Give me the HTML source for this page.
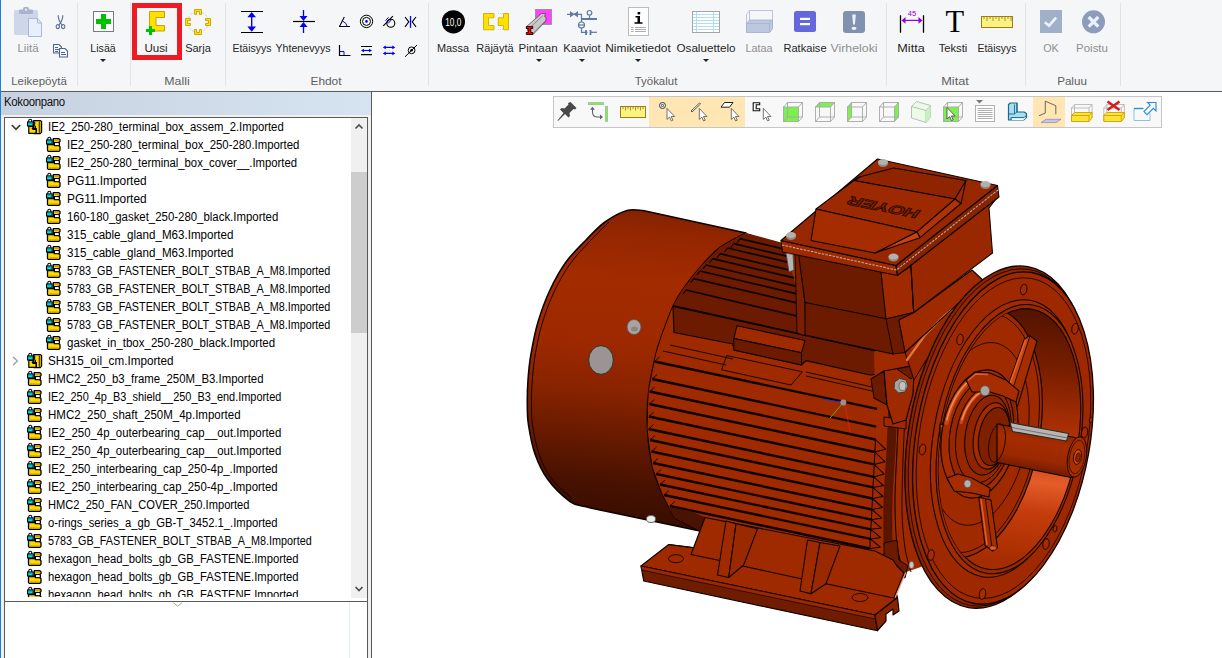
<!DOCTYPE html>
<html lang="fi">
<head>
<meta charset="utf-8">
<title>Kokoonpano</title>
<style>
*{box-sizing:border-box;margin:0;padding:0}
html,body{width:1222px;height:658px;overflow:hidden;background:#fff}
body{position:relative;font-family:"Liberation Sans",sans-serif;font-size:12px;color:#1e1e1e}
.abs{position:absolute}
#ribbon{position:absolute;left:0;top:0;width:1222px;height:91px;background:#f5f6f7}
#ribline{position:absolute;left:0;top:91px;width:1222px;height:1px;background:#5a5a5a}
.sep{position:absolute;top:3px;width:1px;height:83px;background:#e2e3e4}
.lbl{position:absolute;top:41px;height:15px;line-height:15px;font-size:11.8px;white-space:nowrap;transform:translateX(-50%) scaleX(var(--s,1));color:#262626}
.lbl.dis{color:#8f8f8f}
.grp{position:absolute;top:74px;height:15px;line-height:15px;font-size:11.8px;white-space:nowrap;transform:translateX(-50%) scaleX(var(--s,1));color:#5e5e5e}
.dd{position:absolute;top:59px;width:0;height:0;border-left:3px solid transparent;border-right:3px solid transparent;border-top:3px solid #222;transform:translateX(-3px)}
.ico{position:absolute;overflow:visible}
#leftedge{position:absolute;left:0;top:0;width:1px;height:658px;background:#1a80d9}
#panel{position:absolute;left:1px;top:92px;width:370px;height:566px;background:#f0f0f0}
#panelr{position:absolute;left:371px;top:92px;width:1px;height:566px;background:#5a5a5a}
#phead{position:absolute;left:1px;top:92px;width:370px;height:23px;background:linear-gradient(90deg,#c6d2e0,#d6e3f1)}
#phead span{position:absolute;left:3px;top:3px;font-size:12px;line-height:15px;color:#111;letter-spacing:-0.35px;transform-origin:0 50%;transform:scaleX(0.95);display:inline-block}
#tree{position:absolute;left:4px;top:117px;width:364px;height:485px;background:#fff;border:1px solid #5a5a5a;overflow:hidden}
#treeclip{position:absolute;left:0;top:0;width:346px;height:479px;overflow:hidden}
#sb{position:absolute;left:346px;top:0;width:16px;height:480px;background:#f0f0f0}
#lower{position:absolute;left:4px;top:602px;width:364px;height:56px;background:#fff;border-left:1px solid #5a5a5a;border-right:1px solid #5a5a5a}
.row{position:absolute;height:18px;line-height:18px;font-size:12px;white-space:nowrap;color:#000;transform-origin:0 50%;transform:scaleX(var(--s,1))}
#view{position:absolute;left:372px;top:92px;width:850px;height:566px;background:#fff;overflow:hidden}
</style>
</head>
<body>
<div id="ribbon">
<div class="sep" style="left:77px"></div>
<div class="sep" style="left:130px"></div>
<div class="sep" style="left:225px"></div>
<div class="sep" style="left:428px"></div>
<div class="sep" style="left:886px"></div>
<div class="sep" style="left:1025px"></div>
<div class="sep" style="left:1120px"></div>
<div class="abs" style="left:132px;top:3px;width:50px;height:57px;border:5px solid #ed1c24"></div>
<svg class="ico" style="left:0;top:0" width="1222" height="91" viewBox="0 0 1222 91">
<!-- Liita clipboard -->
<rect x="14" y="10" width="24" height="25" rx="1.5" fill="#cdd7e7"/>
<rect x="19" y="9.5" width="14" height="4.5" rx="1" fill="#a8b4cd"/>
<rect x="23" y="7" width="6" height="4" rx="1.5" fill="#a8b4cd"/>
<circle cx="26" cy="9.7" r="1.1" fill="#e8edf6"/>
<path d="M28.5 18.5h9l4 4.5v13.5h-13z" fill="#e8eefb" stroke="#a9b8d4" stroke-width="1"/>
<path d="M37.5 18.5v4.5h4" fill="none" stroke="#a9b8d4" stroke-width="1"/>
<!-- scissors -->
<g fill="none" stroke="#586d96" stroke-width="1.1">
<path d="M58.2 15.2c0 4 1 6.5 4.2 10.2"/><path d="M62.8 15.2c0 4-1 6.500-4.200 10.200"/>
<ellipse cx="57.800" cy="26.600" rx="1.700" ry="2"/><ellipse cx="63.200" cy="26.600" rx="1.700" ry="2"/>
</g>
<!-- copy -->
<g fill="#f5f6f7" stroke="#4f6690" stroke-width="1.1">
<path d="M53.500 44.500h5.500l2.500 2.500v6h-8z"/>
<path d="M59.500 48.500h5.500l2.500 2.500v6h-8z"/>
</g>
<g stroke="#4f6690" stroke-width="1"><path d="M55 47.500h3M55 49.500h4M55 51.500h3M61 52.500h4M61 54.500h5"/></g>
<!-- Lisaa -->
<rect x="93.500" y="11.500" width="20" height="20" fill="#fff" stroke="#7a7a7a" stroke-width="1"/>
<path d="M96 19h5v-5h5v5h5v5h-5v5h-5v-5h-5z" fill="#00c100"/>
<!-- Uusi -->
<path d="M149.500 11.500h15v6h-8.500v8h8.500v5.500h-15z" fill="#ffe100" stroke="#c9a300" stroke-width="1"/>
<path d="M146 29h3v-3h3v3h3v3h-3v3h-3v-3h-3z" fill="#00c100"/>
<!-- Sarja -->
<circle cx="198" cy="22" r="10.300" fill="none" stroke="#c4c4c4" stroke-width="0.800" stroke-dasharray="2.500 1.500"/>
<g fill="#ffe100" stroke="#c9a300" stroke-width="0.900">
<path d="M194.500 14.500v-5h7v5h-2v-3h-3v3z"/>
<path d="M194.500 29.500v5h7v-5h-2v3h-3v-3z"/>
<path d="M190.500 18.500h-5v7h5v-2h-3v-3h3z"/>
<path d="M205.500 18.500h5v7h-5v-2h3v-3h-3z"/>
</g>
<!-- Etaisyys -->
<path d="M241 11.500h22M241 32.500h22" stroke="#000" stroke-width="1.200"/>
<path d="M251.700 14v16" stroke="#0000ff" stroke-width="1.400"/>
<path d="M251.700 12l4.300 5.200h-8.600zM251.700 31.800l4.300-5.200h-8.600z" fill="#0000ff"/>
<!-- Yhtenevyys -->
<path d="M293 21.500h22" stroke="#000" stroke-width="1.200"/>
<path d="M303.500 10v9M303.500 24v9" stroke="#0000ff" stroke-width="1.300"/>
<path d="M303.500 21l4-5h-8zM303.500 22l4 5h-8z" fill="#0000ff"/>
<!-- small constraint icons row1 -->
<path d="M339 26.500h11M339.500 26.500l4.800-9.500" fill="none" stroke="#000" stroke-width="1.100"/>
<path d="M342.500 21l3.300 2.300l1.200 2.800" fill="none" stroke="#0000ff" stroke-width="1"/>
<circle cx="366.500" cy="21.400" r="6.200" fill="none" stroke="#000" stroke-width="1"/>
<circle cx="366.500" cy="21.400" r="4" fill="none" stroke="#000" stroke-width="1"/>
<circle cx="366.500" cy="21.400" r="1.300" fill="#0000ff"/>
<path d="M383.300 25.800l9.600-9.700" stroke="#000" stroke-width="1.100"/>
<circle cx="390.800" cy="23.300" r="4" fill="none" stroke="#000" stroke-width="1.100"/>
<path d="M385.500 20.700l3-3.400M388.200 23.400l3-3.400" stroke="#0000ff" stroke-width="1"/>
<path d="M410.500 16v11.800" stroke="#0000ff" stroke-width="1.300"/>
<path d="M405 17l3.800 4.800l-3.800 5M416 17l-3.800 4.800l3.800 5" fill="none" stroke="#000" stroke-width="1.100"/>
<!-- row2 -->
<path d="M339.500 45v10.500h11" fill="none" stroke="#000" stroke-width="1.200"/>
<path d="M339.500 51.500h4.500v4" fill="none" stroke="#0000ff" stroke-width="1"/>
<path d="M361 46.500h11M361 54.700h11" stroke="#000" stroke-width="1.200"/>
<path d="M362.500 50.500h8" stroke="#0000ff" stroke-width="1.100"/>
<path d="M361 50.500l3-1.800v3.600zM372 50.500l-3-1.800v3.600z" fill="#0000ff"/>
<path d="M384 47.400h10M384 53.400h10" stroke="#0000ff" stroke-width="1.100"/>
<path d="M382.800 47.400l3-1.800v3.600zM395.300 47.400l-3-1.800v3.600zM382.800 53.400l3-1.800v3.600zM395.300 53.400l-3-1.800v3.600z" fill="#0000ff"/>
<path d="M405 56.800l12-11.800" stroke="#000" stroke-width="1"/>
<circle cx="411.600" cy="50.300" r="3.400" fill="none" stroke="#000" stroke-width="1"/>
<circle cx="411.600" cy="50.300" r="1.300" fill="#000"/>
<!-- Massa -->
<circle cx="453.400" cy="21.800" r="11.600" fill="#000"/>
<text x="453.300" y="26" font-family="Liberation Sans, sans-serif" font-size="11.500" fill="#fff" text-anchor="middle" textLength="16" lengthAdjust="spacingAndGlyphs">10,0</text>
<!-- Rajayta -->
<path d="M486 13.500h6M486 29.500h6M500 13.500h-6M500 29.500h-6" stroke="#c8c8c8" stroke-width="0.800" stroke-dasharray="1 1" transform="translate(3 0)"/>
<path d="M483.500 13.500h10.500v4.300h-5.500v7.700h5.500v4.300h-10.500z" fill="#ffe100" stroke="#d1ab00" stroke-width="0.900"/>
<path d="M508.500 13.500h-5v4.300h-5.200v7.700h5.200v4.300h5z" fill="#ffe100" stroke="#d1ab00" stroke-width="0.900"/>
<!-- Pintaan -->
<rect x="535.500" y="9.500" width="16" height="15" fill="#ff40ff" stroke="#8c8c8c" stroke-width="0.800"/>
<path d="M526.500 26.500l15-13h4l-1 3l1.500 1v3.500l-13 13.500h-4z" fill="#c8c8c8" stroke="#404040" stroke-width="0.700"/>
<path d="M533 33.500l13-13.500M530 27.500l13-12" stroke="#707070" stroke-width="0.700"/>
<path d="M526.300 26.500h6.500v2h-2v4h2v2h-6.500v-2h2v-4h-2z" fill="#ff0000" stroke="#000" stroke-width="0.800"/>
<!-- Kaaviot -->
<g fill="none" stroke="#5d79a6" stroke-width="1.200">
<path d="M567 14.300h14.500v18h6"/>
<path d="M581.500 19h15.500" stroke-width="2"/>
<path d="M589.500 15.500v3.500"/>
<circle cx="589.500" cy="12.800" r="2.300" fill="#f5f6f7"/>
<circle cx="581.500" cy="25" r="3" fill="#f5f6f7"/>
<path d="M578.500 25h6"/>
<path d="M586 30v5M590.500 30v5" stroke-width="1.800"/>
<path d="M591 32.300h6"/>
</g>
<path d="M570 11l4.500 3.300l-4.500 3.300zM578 11l-4.500 3.300l4.500 3.300z" fill="#5d79a6"/>
<!-- Nimiketiedot -->
<rect x="628.500" y="7.500" width="20" height="28" fill="#fff" stroke="#bdbdbd" stroke-width="1"/>
<path d="M635.500 16h4.500v6.200h2.500v1.600h-8v-1.600h3v-4.600h-2z" fill="#000"/>
<rect x="637.600" y="12" width="2.600" height="2.400" fill="#000"/>
<path d="M631 27.500h2.500M635 27.500h11M631 29.500h2.500M635 29.500h11M631 31.500h2.500M635 31.500h11" stroke="#8a8a8a" stroke-width="0.700"/>
<!-- Osaluettelo -->
<rect x="692.500" y="11.500" width="27" height="21" fill="#fff" stroke="#a4a4a4" stroke-width="1"/>
<path d="M693 14.500h26M693 17.500h26M693 20.500h26M693 23.500h26M693 26.500h26M693 29.500h26M696.500 12v20M713.500 12v20" stroke="#a9d9f6" stroke-width="0.900"/>
<!-- Lataa -->
<path d="M746.500 14.500l3-4h23v18l-3 4h-23z" fill="none" stroke="#b4c0d9" stroke-width="0.900"/>
<path d="M749.500 10.500v12M749.500 22.500h23" fill="none" stroke="#b4c0d9" stroke-width="0.900"/>
<path d="M746.500 23.500l3-3.500h23v8.500l-3 4h-23z" fill="#bcc8dd" stroke="#a7b5d0" stroke-width="0.900"/>
<path d="M746.500 23.500h23v9M769.500 23.500l3-3.500" fill="none" stroke="#a7b5d0" stroke-width="0.900"/>
<!-- Ratkaise -->
<rect x="794" y="11" width="22" height="21" rx="2.500" fill="#6468dc"/>
<rect x="800" y="17.800" width="10" height="2.200" fill="#fff"/><rect x="800" y="23" width="10" height="2.200" fill="#fff"/>
<!-- Virheloki -->
<rect x="843" y="11" width="22" height="22" rx="3" fill="#8192b1"/>
<path d="M852.200 14.500h3.600l-0.900 10h-1.800z" fill="#edf1fa"/>
<ellipse cx="854" cy="28.300" rx="2.500" ry="1.600" fill="#edf1fa"/>
<!-- Mitta -->
<path d="M900.500 15.200v17.600M923.500 15.200v17.600" stroke="#000" stroke-width="1.300"/>
<path d="M904 20.400h16" stroke="#9400d3" stroke-width="1.200"/>
<path d="M901.500 20.400l4-3.300v6.600zM922.500 20.400l-4-3.300v6.600z" fill="#9400d3"/>
<text x="912" y="16" font-family="Liberation Sans, sans-serif" font-size="7.500" fill="#9400d3" text-anchor="middle">45</text>
<!-- Teksti T -->
<text x="954.700" y="32.300" font-family="Liberation Serif, serif" font-size="30.500" fill="#000" text-anchor="middle">T</text>
<!-- ruler -->
<rect x="981.500" y="16.500" width="31" height="11" fill="#fbf380" stroke="#a47a12" stroke-width="1"/>
<path d="M984 17v2M987 17v4M990 17v2M993 17v4M996 17v2M999 17v4M1002 17v2M1005 17v4M1008 17v2M1011 17v4" stroke="#7a6a30" stroke-width="0.700"/>
<!-- OK -->
<rect x="1040" y="10" width="22" height="23" fill="#a0b0c9"/>
<path d="M1044.800 22.200l4.300 3.500l7-8" fill="none" stroke="#eef2fb" stroke-width="2.600"/>
<!-- Poistu -->
<circle cx="1093.500" cy="21.800" r="11.500" fill="#8c9cba"/>
<path d="M1088.700 17l9.600 9.600M1098.300 17l-9.600 9.600" stroke="#eaf0fd" stroke-width="3.200"/>
</svg>
<div class="lbl dis" style="left:27.5px;--s:0.974">Liitä</div>
<div class="lbl" style="left:102.5px;--s:0.901">Lisää</div>
<div class="lbl" style="left:155.5px;--s:0.978">Uusi</div>
<div class="lbl" style="left:197.7px;--s:0.933">Sarja</div>
<div class="lbl" style="left:251.5px;--s:0.890">Etäisyys</div>
<div class="lbl" style="left:303.4px;--s:0.904">Yhtenevyys</div>
<div class="lbl" style="left:453px;--s:0.924">Massa</div>
<div class="lbl" style="left:495.4px;--s:0.933">Räjäytä</div>
<div class="lbl" style="left:538.3px;--s:0.977">Pintaan</div>
<div class="lbl" style="left:581.6px;--s:0.948">Kaaviot</div>
<div class="lbl" style="left:638.2px;--s:1.011">Nimiketiedot</div>
<div class="lbl" style="left:706px;--s:0.990">Osaluettelo</div>
<div class="lbl dis" style="left:759.3px;--s:0.918">Lataa</div>
<div class="lbl" style="left:804.5px;--s:0.939">Ratkaise</div>
<div class="lbl dis" style="left:854px;--s:1.046">Virheloki</div>
<div class="lbl" style="left:911.4px;--s:1.071">Mitta</div>
<div class="lbl" style="left:953px;--s:0.945">Teksti</div>
<div class="lbl" style="left:996.5px;--s:0.890">Etäisyys</div>
<div class="lbl dis" style="left:1050.8px;--s:0.915">OK</div>
<div class="lbl dis" style="left:1092px;--s:0.973">Poistu</div>
<div class="grp" style="left:38.6px;--s:0.973">Leikepöytä</div>
<div class="grp" style="left:177px;--s:1.047">Malli</div>
<div class="grp" style="left:326px;--s:1.008">Ehdot</div>
<div class="grp" style="left:656.3px;--s:0.970">Työkalut</div>
<div class="grp" style="left:955px;--s:1.083">Mitat</div>
<div class="grp" style="left:1071.6px;--s:0.984">Paluu</div>
<div class="dd" style="left:102.5px"></div>
<div class="dd" style="left:538.5px"></div>
<div class="dd" style="left:581.6px"></div>
<div class="dd" style="left:637.5px"></div>
<div class="dd" style="left:705.6px"></div>
</div>
<div id="ribline"></div>
<div id="leftedge"></div>
<svg width="0" height="0" style="position:absolute">
<defs>
<g id="lock">
<path d="M1.800 3.200v-1.500c0-1.900 3-1.900 3 0v1.500" fill="#fff" stroke="#000" stroke-width="1.100"/>
<rect x="0.550" y="2.950" width="5.600" height="4" fill="#00dfe8" stroke="#000" stroke-width="1.100"/>
<rect x="1.100" y="3.500" width="4.500" height="1" fill="#008c96"/>
</g>
<symbol id="icA" viewBox="0 0 16 16" overflow="visible">
<path d="M6.600 1.600h6.600l1.400 1v10.400l-1.400 1.600h-6.600z" fill="#ffd900" stroke="#000" stroke-width="1.200" stroke-linejoin="round"/>
<path d="M12.300 2.600v11.200" stroke="#000" stroke-width="1"/>
<path d="M13.300 3.200v10.400" stroke="#c79a00" stroke-width="1"/>
<path d="M1.800 7.400h4.200v3h3.200v4h-7.400z" fill="#ffd900" stroke="#000" stroke-width="1.200" stroke-linejoin="round"/>
<path d="M4.800 9.400h3.600v-2.400M9.300 9v5.600" fill="none" stroke="#000" stroke-width="1.100"/>
<path d="M7.700 2.400v5" stroke="#000" stroke-width="1"/>
<use href="#lock"/>
</symbol>
<symbol id="icP" viewBox="0 0 16 16" overflow="visible">
<path d="M7.300 1.700h5.600l1.100 1v1.900l-1.100 1h-4.500v3.100h4.500l1.100 1v3.600l-1.100 1.100h-10.600l-0.800-0.800v-5.900h5.800z" fill="#ffd900" stroke="#000" stroke-width="1.300" stroke-linejoin="round"/>
<path d="M8.300 3.600h4.600M2.800 12.900h9.800" stroke="#c79a00" stroke-width="0.900"/>
<path d="M9 7.150h3.600" stroke="#fff" stroke-width="1.900"/><path d="M13.400 5.600v3.100" stroke="#000" stroke-width="1.300"/>
<use href="#lock"/>
</symbol>
</defs>
</svg>
<div id="panel"></div>
<div id="phead"><span>Kokoonpano</span></div>
<div id="panelr"></div>
<div id="tree">
<div id="treeclip">
<svg class="abs" style="left:6px;top:6px" width="10" height="7" viewBox="0 0 10 7"><path d="M0.800 1l4.200 4.300l4.200-4.300" fill="none" stroke="#3c3c3c" stroke-width="1.700"/></svg>
<svg class="abs" style="left:22px;top:1px;overflow:visible" width="16" height="16"><use href="#icA"/></svg>
<div class="row" style="left:42.6px;top:0px;--s:0.9422">IE2_250-280_terminal_box_assem_2.Imported</div>
<svg class="abs" style="left:41px;top:19px;overflow:visible" width="16" height="16"><use href="#icP"/></svg>
<div class="row" style="left:61.6px;top:18px;--s:0.9466">IE2_250-280_terminal_box_250-280.Imported</div>
<svg class="abs" style="left:41px;top:37px;overflow:visible" width="16" height="16"><use href="#icP"/></svg>
<div class="row" style="left:61.6px;top:36px;--s:0.9424">IE2_250-280_terminal_box_cover__.Imported</div>
<svg class="abs" style="left:41px;top:55px;overflow:visible" width="16" height="16"><use href="#icP"/></svg>
<div class="row" style="left:61.6px;top:54px;--s:0.9890">PG11.Imported</div>
<svg class="abs" style="left:41px;top:73px;overflow:visible" width="16" height="16"><use href="#icP"/></svg>
<div class="row" style="left:61.6px;top:72px;--s:0.9890">PG11.Imported</div>
<svg class="abs" style="left:41px;top:91px;overflow:visible" width="16" height="16"><use href="#icP"/></svg>
<div class="row" style="left:61.6px;top:90px;--s:0.9511">160-180_gasket_250-280_black.Imported</div>
<svg class="abs" style="left:41px;top:109px;overflow:visible" width="16" height="16"><use href="#icP"/></svg>
<div class="row" style="left:61.6px;top:108px;--s:0.9673">315_cable_gland_M63.Imported</div>
<svg class="abs" style="left:41px;top:127px;overflow:visible" width="16" height="16"><use href="#icP"/></svg>
<div class="row" style="left:61.6px;top:126px;--s:0.9673">315_cable_gland_M63.Imported</div>
<svg class="abs" style="left:41px;top:145px;overflow:visible" width="16" height="16"><use href="#icP"/></svg>
<div class="row" style="left:61.6px;top:144px;--s:0.8999">5783_GB_FASTENER_BOLT_STBAB_A_M8.Imported</div>
<svg class="abs" style="left:41px;top:163px;overflow:visible" width="16" height="16"><use href="#icP"/></svg>
<div class="row" style="left:61.6px;top:162px;--s:0.8999">5783_GB_FASTENER_BOLT_STBAB_A_M8.Imported</div>
<svg class="abs" style="left:41px;top:181px;overflow:visible" width="16" height="16"><use href="#icP"/></svg>
<div class="row" style="left:61.6px;top:180px;--s:0.8999">5783_GB_FASTENER_BOLT_STBAB_A_M8.Imported</div>
<svg class="abs" style="left:41px;top:199px;overflow:visible" width="16" height="16"><use href="#icP"/></svg>
<div class="row" style="left:61.6px;top:198px;--s:0.8999">5783_GB_FASTENER_BOLT_STBAB_A_M8.Imported</div>
<svg class="abs" style="left:41px;top:217px;overflow:visible" width="16" height="16"><use href="#icP"/></svg>
<div class="row" style="left:61.6px;top:216px;--s:0.9602">gasket_in_tbox_250-280_black.Imported</div>
<svg class="abs" style="left:7px;top:238px" width="7" height="10" viewBox="0 0 7 10"><path d="M1 0.800l4.300 4.200l-4.300 4.200" fill="none" stroke="#a0a0a0" stroke-width="1.400"/></svg>
<svg class="abs" style="left:22px;top:235px;overflow:visible" width="16" height="16"><use href="#icA"/></svg>
<div class="row" style="left:42.6px;top:234px;--s:0.9757">SH315_oil_cm.Imported</div>
<svg class="abs" style="left:22px;top:253px;overflow:visible" width="16" height="16"><use href="#icP"/></svg>
<div class="row" style="left:42.6px;top:252px;--s:0.9501">HMC2_250_b3_frame_250M_B3.Imported</div>
<svg class="abs" style="left:22px;top:271px;overflow:visible" width="16" height="16"><use href="#icP"/></svg>
<div class="row" style="left:42.6px;top:270px;--s:0.9106">IE2_250_4p_B3_shield__250_B3_end.Imported</div>
<svg class="abs" style="left:22px;top:289px;overflow:visible" width="16" height="16"><use href="#icP"/></svg>
<div class="row" style="left:42.6px;top:288px;--s:0.9592">HMC2_250_shaft_250M_4p.Imported</div>
<svg class="abs" style="left:22px;top:307px;overflow:visible" width="16" height="16"><use href="#icP"/></svg>
<div class="row" style="left:42.6px;top:306px;--s:0.9502">IE2_250_4p_outerbearing_cap__out.Imported</div>
<svg class="abs" style="left:22px;top:325px;overflow:visible" width="16" height="16"><use href="#icP"/></svg>
<div class="row" style="left:42.6px;top:324px;--s:0.9502">IE2_250_4p_outerbearing_cap__out.Imported</div>
<svg class="abs" style="left:22px;top:343px;overflow:visible" width="16" height="16"><use href="#icP"/></svg>
<div class="row" style="left:42.6px;top:342px;--s:0.9480">IE2_250_interbearing_cap_250-4p_.Imported</div>
<svg class="abs" style="left:22px;top:361px;overflow:visible" width="16" height="16"><use href="#icP"/></svg>
<div class="row" style="left:42.6px;top:360px;--s:0.9480">IE2_250_interbearing_cap_250-4p_.Imported</div>
<svg class="abs" style="left:22px;top:379px;overflow:visible" width="16" height="16"><use href="#icP"/></svg>
<div class="row" style="left:42.6px;top:378px;--s:0.9266">HMC2_250_FAN_COVER_250.Imported</div>
<svg class="abs" style="left:22px;top:397px;overflow:visible" width="16" height="16"><use href="#icP"/></svg>
<div class="row" style="left:42.6px;top:396px;--s:0.9379">o-rings_series_a_gb_GB-T_3452.1_.Imported</div>
<svg class="abs" style="left:22px;top:415px;overflow:visible" width="16" height="16"><use href="#icP"/></svg>
<div class="row" style="left:42.6px;top:414px;--s:0.9012">5783_GB_FASTENER_BOLT_STBAB_A_M8.Imported</div>
<svg class="abs" style="left:22px;top:433px;overflow:visible" width="16" height="16"><use href="#icP"/></svg>
<div class="row" style="left:42.6px;top:432px;--s:0.9368">hexagon_head_bolts_gb_GB_FASTENE.Imported</div>
<svg class="abs" style="left:22px;top:451px;overflow:visible" width="16" height="16"><use href="#icP"/></svg>
<div class="row" style="left:42.6px;top:450px;--s:0.9368">hexagon_head_bolts_gb_GB_FASTENE.Imported</div>
<svg class="abs" style="left:22px;top:469px;overflow:visible" width="16" height="16"><use href="#icP"/></svg>
<div class="row" style="left:42.6px;top:468px;--s:0.9368">hexagon_head_bolts_gb_GB_FASTENE.Imported</div>
</div>
<div id="sb">
<svg class="abs" style="left:0;top:0" width="16" height="479" viewBox="0 0 16 479">
<rect x="0" y="54" width="16" height="161" fill="#cdcdcd"/>
<path d="M4.500 10.500l3.500-3.500l3.500 3.500" fill="none" stroke="#505050" stroke-width="1.700"/>
<path d="M4.500 469l3.500 3.500l3.500-3.500" fill="none" stroke="#505050" stroke-width="1.700"/>
</svg>
</div>
</div>
<div id="lower"><div class="abs" style="left:344px;top:0;width:1px;height:56px;background:#e6eef7"></div></div>
<svg class="abs" style="left:172px;top:602px" width="12" height="6" viewBox="0 0 12 6"><path d="M1.500 0.800l4.200 3.400l4.200-3.400" fill="none" stroke="#9a9a9a" stroke-width="0.900"/></svg>
<svg class="abs" style="left:553px;top:96px;z-index:5" width="609" height="32" viewBox="553 96 609 32">
<defs>
<g id="cur"><path d="M0 0v11l2.600-2.300l1.700 3.800l1.600-0.700l-1.700-3.700h3.500z" fill="#fff" stroke="#505050" stroke-width="0.800" stroke-linejoin="round"/></g>
<g id="cubew" fill="none" stroke="#a8a8a8" stroke-width="0.900"><rect x="0.500" y="5" width="15" height="14.500"/><rect x="4.500" y="0.500" width="15" height="14.500"/><path d="M0.500 5l4-4.500M15.500 5l4-4.500M0.500 19.500l4-4.500M15.500 19.500l4-4.500"/></g>
</defs>
<rect x="553.500" y="96.500" width="608" height="31" fill="#f8f8f8" stroke="#c6c6c6" stroke-width="1"/>
<rect x="649" y="97" width="96" height="30" fill="#ffe6b3"/>
<rect x="1033" y="97" width="32" height="30" fill="#ffe6b3"/>
<!-- pin -->
<path d="M570.500 102l6 6l-1.500 1.500l-1.500-0.500l-4 4l0.500 3l-1.500 1.500l-3.500-3.500l-7 7l-0.500-0.500l6-7.500l-3.500-3.500l1.500-1.500l3 0.500l4-4l-0.500-1.500z" fill="#484848"/>
<!-- arrows -->
<rect x="588.500" y="102.500" width="15" height="2.200" fill="#7cf04c" stroke="#a0a8a0" stroke-width="0.600"/>
<rect x="605.300" y="106.300" width="2.400" height="15" fill="#7cf04c" stroke="#a0a8a0" stroke-width="0.600"/>
<path d="M592.500 108.500v3.500c0 3 2 5 5 5h4" fill="none" stroke="#5a626a" stroke-width="1.100"/>
<path d="M592.500 106.800l2.400 3h-4.800zM603 117l-3 2.400v-4.800z" fill="#5a626a"/>
<!-- ruler -->
<rect x="620.500" y="106.500" width="25" height="11" fill="#fbf380" stroke="#a47a12" stroke-width="1"/>
<path d="M623 107v2M625.500 107v3.500M628 107v2M630.500 107v3.500M633 107v2M635.500 107v3.500M638 107v2M640.500 107v3.500M643 107v2" stroke="#7a6a30" stroke-width="0.700"/>
<!-- select cursors -->
<circle cx="662.500" cy="105.500" r="3" fill="#fff" stroke="#222" stroke-width="0.900"/><circle cx="662.500" cy="105.500" r="1.200" fill="none" stroke="#222" stroke-width="0.800"/>
<use href="#cur" x="667" y="108.400"/>
<path d="M691 111l8.500-8l1 1l-8.500 8z" fill="#fff" stroke="#333" stroke-width="0.800"/>
<use href="#cur" x="699.300" y="108.400"/>
<path d="M724.500 102.500h8.500l-3.500 4.700h-8.500z" fill="#fff" stroke="#222" stroke-width="1"/>
<use href="#cur" x="731.300" y="108.400"/>
<path d="M753.200 102.700h6.500v2h-3.500v4h3.500v2h-6.500z" fill="#fff" stroke="#111" stroke-width="1.100"/>
<use href="#cur" x="763.300" y="108.400"/>
<!-- cubes -->
<rect x="783.500" y="107" width="15" height="14.500" fill="#7cf04c"/><use href="#cubew" x="783" y="102"/>
<path d="M815.500 107l4-4.500h15l-4 4.500z" fill="#7cf04c"/><use href="#cubew" x="815" y="102"/>
<path d="M847.500 107l4-4.500v14.500l-4 4.500z" fill="#7cf04c"/><use href="#cubew" x="847" y="102"/>
<path d="M894.500 107l4-4.500v14.500l-4 4.500z" fill="#7cf04c"/><use href="#cubew" x="879" y="102"/>
<path d="M911.500 106.500l5-5l14 4v12l-4.500 5l-14.500-4.500z" fill="#eafbe6" stroke="#b4b8b4" stroke-width="0.900"/>
<path d="M911.500 106.500l14.500 4l4.500-5M926 110.500v12" fill="none" stroke="#b4b8b4" stroke-width="0.900"/>
<path d="M926 110.500l4.500-5v12l-4.500 5z" fill="#c6f2c0"/>
<rect x="943.500" y="107" width="15" height="14.500" fill="#7cf04c"/><use href="#cubew" x="943" y="102"/>
<path d="M947 107.500v11.500l2.700-2.400l1.800 4l1.700-0.800l-1.800-3.800h3.700z" fill="#fff" stroke="#404040" stroke-width="0.800" stroke-linejoin="round"/>
<!-- list -->
<path d="M976 100h7l-3.500 3.500z" fill="#787878"/>
<rect x="975.500" y="105.500" width="19" height="16" fill="#fff" stroke="#b0b0b0" stroke-width="1"/>
<path d="M977.500 108.500h15M977.500 110.500h15M977.500 112.500h15M977.500 114.500h15M977.500 116.500h15M977.500 118.500h15" stroke="#8c8c8c" stroke-width="0.700"/>
<!-- blue L -->
<path d="M1008.500 104.500l2-1.500h6.500v9h7l2.500 1.500v4l-3 2.500h-15z" fill="#a9ddf2" stroke="#1a6a8c" stroke-width="1.200" stroke-linejoin="round"/>
<path d="M1017 103v9M1017 112l-2.500 2h-6M1014.500 114v-9.500M1011 117.500h13l2.500-2M1011 117.500v2.500" fill="none" stroke="#1a6a8c" stroke-width="0.900"/>
<path d="M1012 118.500h11.500l2-1.500v1.500l-2.500 1.500h-11z" fill="#fff"/>
<!-- plane -->
<path d="M1039 115.800l6.300-2.800v-11.800l10.500 4.500v8.600" fill="none" stroke="#5a5a5a" stroke-width="0.900"/>
<path d="M1046 119.300h15l-5 3.300h-15z" fill="#c4c4f4" stroke="#7a7a9a" stroke-width="0.600"/>
<!-- yellow boxes -->
<g id="ybox">
<path d="M1071.500 108l3-3.500h17.500v13l-3 3.500h-17.500z" fill="none" stroke="#b8b8b8" stroke-width="0.900"/>
<path d="M1074.500 104.500v9M1089 108v13M1071.500 108h17.500l3-3.500" fill="none" stroke="#b8b8b8" stroke-width="0.900"/>
<path d="M1071.500 115.500l3-3h17.500v5.500l-3 3.500h-17.500z" fill="#ffe23a" stroke="#c9a300" stroke-width="0.900"/>
<path d="M1071.500 115.500h17.500v6M1089 115.500l3-3" fill="none" stroke="#c9a300" stroke-width="0.900"/>
</g>
<use href="#ybox" x="32.300" y="0"/>
<path d="M1107.500 101.500l12 8.500M1119.500 101.500l-12 8.500" stroke="#d02020" stroke-width="2.600"/>
<!-- window arrow -->
<path d="M1134 108.500h10M1150 113v7.500h-16v-12" fill="none" stroke="#8cc0e8" stroke-width="1"/>
<path d="M1134 108.500h9" stroke="#2a8dd0" stroke-width="1.400"/>
<path d="M1147.500 102.500h8.500v8.500l-2.700-2.700l-6.300 6.300l-3.100-3.100l6.300-6.300z" fill="#f8f8f8" stroke="#2a8dd0" stroke-width="1.100" stroke-linejoin="miter"/>
</svg>
<svg class="abs" style="left:372px;top:92px" width="850" height="566" viewBox="372 92 850 566">
<defs>
<linearGradient id="gFan" gradientUnits="userSpaceOnUse" x1="640" y1="212" x2="612" y2="524">
<stop offset="0" stop-color="#842200"/><stop offset="0.06" stop-color="#932600"/><stop offset="0.22" stop-color="#a32b00"/><stop offset="0.42" stop-color="#9e2900"/><stop offset="0.58" stop-color="#882300"/><stop offset="0.74" stop-color="#641900"/><stop offset="0.88" stop-color="#461100"/><stop offset="1" stop-color="#380d00"/>
</linearGradient>
<linearGradient id="gBowl" gradientUnits="userSpaceOnUse" x1="1030" y1="300" x2="1050" y2="560">
<stop offset="0" stop-color="#4e1200"/><stop offset="0.25" stop-color="#7a1e00"/><stop offset="0.5" stop-color="#b03205"/><stop offset="0.68" stop-color="#e45c28"/><stop offset="0.8" stop-color="#c43c0c"/><stop offset="1" stop-color="#a42c00"/>
</linearGradient>
<linearGradient id="gShaft" gradientUnits="userSpaceOnUse" x1="1040" y1="428" x2="1032" y2="472">
<stop offset="0" stop-color="#8a2300"/><stop offset="0.3" stop-color="#a52c00"/><stop offset="0.7" stop-color="#9a2800"/><stop offset="1" stop-color="#6a1a00"/>
</linearGradient>
</defs>
<path d="M742.0 232.0 L716.0 247.5 L696.0 267.5 L678.5 290.0 L668.5 307.5 L658.0 335.0 L652.0 354.0 L644.7 391.5 L643.5 429.0 L648.5 466.5 L658.5 494.0 L671.0 518.0 L690.0 525.0 L705.0 517.5 L875.0 551.0 L900.0 560.0 L915.0 540.0 L915.0 330.0 L800.0 250.0Z" fill="#a02a00" stroke="none" stroke-width="1.17" stroke-linejoin="round" />
<path d="M643.0 210.5 L746.0 233.0 L746.0 233.0 C741.7 235.4 727.7 241.8 720.0 247.5 C712.3 253.2 706.2 260.4 700.0 267.5 C693.8 274.6 687.1 283.3 682.5 290.0 C677.9 296.7 675.9 300.0 672.5 307.5 C669.1 315.0 664.8 327.2 662.0 335.0 C659.2 342.8 658.2 344.6 656.0 354.0 C653.8 363.4 650.1 379.0 648.7 391.5 C647.3 404.0 646.9 416.5 647.5 429.0 C648.1 441.5 650.0 455.7 652.5 466.5 C655.0 477.3 658.8 485.4 662.5 494.0 C666.2 502.6 672.9 514.0 675.0 518.0 L675.0 518.0 L700.0 531.0 L600.0 510.0 L600.0 510.0 C597.5 509.4 590.0 507.9 585.0 506.5 C580.0 505.1 576.2 506.1 570.0 501.5 C563.8 496.9 553.3 486.9 547.5 479.0 C541.7 471.1 538.2 463.0 535.0 454.0 C531.8 445.0 529.8 433.3 528.5 425.0 C527.2 416.7 527.4 411.5 527.3 404.0 C527.2 396.5 527.4 388.3 528.0 380.0 C528.6 371.7 529.3 363.7 531.0 354.0 C532.7 344.3 534.8 332.7 538.0 322.0 C541.2 311.3 545.3 300.0 550.0 290.0 C554.7 280.0 560.0 270.3 566.0 262.0 C572.0 253.7 579.5 246.7 586.0 240.0 C592.5 233.3 598.2 226.9 605.0 222.0 C611.8 217.1 620.7 212.4 627.0 210.5 C633.3 208.6 640.3 210.5 643.0 210.5 Z" fill="url(#gFan)" stroke="#0c0200" stroke-width="1.56" stroke-linejoin="round" />
<path d="M609.0 222.0 C605.8 225.2 596.5 234.0 590.0 241.0 C583.5 248.0 576.0 255.5 570.0 264.0 C564.0 272.5 558.7 282.0 554.0 292.0 C549.3 302.0 545.2 313.3 542.0 324.0 C538.8 334.7 536.7 346.0 535.0 356.0 C533.3 366.0 532.6 376.0 532.0 384.0 C531.4 392.0 531.4 397.2 531.5 404.0 C531.6 410.8 531.2 416.7 532.5 425.0 C533.8 433.3 535.9 445.2 539.0 454.0 C542.1 462.8 545.5 470.5 551.0 478.0 C556.5 485.5 568.5 495.5 572.0 499.0" fill="none" stroke="#0c0200" stroke-width="0.91" />
<ellipse cx="601" cy="360" rx="12.3" ry="14.3" fill="#9a9594" stroke="#2a2a2a" stroke-width="0.9"/>
<ellipse cx="634" cy="327" rx="7" ry="7.5" fill="#a8a4a2" stroke="#555" stroke-width="0.8"/>
<ellipse cx="634.500" cy="329" rx="3.500" ry="2.500" fill="#8a8684"/>
<ellipse cx="651" cy="519" rx="4.500" ry="3.500" fill="#eee" stroke="#666" stroke-width="1"/>
<path d="M746.0 233.0 L720.0 247.5 L700.0 267.5 L682.5 290.0 L672.5 307.5 L662.0 335.0 L656.0 354.0 L648.7 391.5 L647.5 429.0 L652.5 466.5 L662.5 494.0 L675.0 518.0 L690.0 525.0 L705.0 517.5 L875.0 551.0 L900.0 560.0 L915.0 540.0 L915.0 330.0 L800.0 250.0Z" fill="#a02a00" stroke="none" stroke-width="1.17" stroke-linejoin="round" />
<path d="M670.0 345.0 L733.0 359.0" fill="none" stroke="#0c0200" stroke-width="0.91" />
<path d="M663.0 351.0 L726.0 365.0" fill="none" stroke="#0c0200" stroke-width="0.91" />
<path d="M726.7 355.5 L802.4 371.8" fill="none" stroke="#0c0200" stroke-width="0.91" />
<path d="M721.6 369.8 L791.0 385.0" fill="none" stroke="#0c0200" stroke-width="0.91" />
<path d="M726.7 355.5 L721.6 369.8" fill="none" stroke="#0c0200" stroke-width="0.91" />
<path d="M802.4 371.8 L791.0 385.0" fill="none" stroke="#0c0200" stroke-width="0.91" />
<path d="M806.0 372.0 L872.0 387.0" fill="none" stroke="#0c0200" stroke-width="0.91" />
<path d="M806.0 376.0 L872.0 391.0" fill="none" stroke="#0c0200" stroke-width="0.91" />
<path d="M746.0 233.0 L720.0 247.5 L700.0 267.5 L682.5 290.0 L673.0 306.0 L797.0 333.3 L800.0 300.0 L783.0 243.0Z" fill="#6c1b01" stroke="none" stroke-width="1.17" stroke-linejoin="round" />
<path d="M740.0 238.7 L785.5 249.4" fill="none" stroke="#0c0200" stroke-width="1.7" />
<path d="M740.0 238.7 L737.0 242.7" fill="none" stroke="#0c0200" stroke-width="1.04" />
<path d="M733.7 243.7 L787.6 256.4" fill="none" stroke="#0c0200" stroke-width="1.7" />
<path d="M733.7 243.7 L730.7 247.7" fill="none" stroke="#0c0200" stroke-width="1.04" />
<path d="M727.5 248.0 L789.5 262.6" fill="none" stroke="#0c0200" stroke-width="1.7" />
<path d="M727.5 248.0 L724.5 252.0" fill="none" stroke="#0c0200" stroke-width="1.04" />
<path d="M720.0 253.7 L791.9 270.6" fill="none" stroke="#0c0200" stroke-width="1.7" />
<path d="M720.0 253.7 L717.0 257.7" fill="none" stroke="#0c0200" stroke-width="1.04" />
<path d="M712.5 258.7 L794.1 277.9" fill="none" stroke="#0c0200" stroke-width="1.7" />
<path d="M712.5 258.7 L709.5 262.7" fill="none" stroke="#0c0200" stroke-width="1.04" />
<path d="M706.0 265.0 L796.6 286.3" fill="none" stroke="#0c0200" stroke-width="1.7" />
<path d="M706.0 265.0 L703.0 269.0" fill="none" stroke="#0c0200" stroke-width="1.04" />
<path d="M700.0 271.0 L799.0 294.3" fill="none" stroke="#0c0200" stroke-width="1.7" />
<path d="M700.0 271.0 L697.0 275.0" fill="none" stroke="#0c0200" stroke-width="1.04" />
<path d="M693.7 278.7 L801.9 304.1" fill="none" stroke="#0c0200" stroke-width="1.7" />
<path d="M693.7 278.7 L690.7 282.7" fill="none" stroke="#0c0200" stroke-width="1.04" />
<path d="M686.0 290.0 L806.2 318.2" fill="none" stroke="#0c0200" stroke-width="1.7" />
<path d="M686.0 290.0 L683.0 294.0" fill="none" stroke="#0c0200" stroke-width="1.04" />
<path d="M673.0 306.0 L805.0 335.0 L893.0 354.4 L897.0 372.0 L870.0 375.0 L806.0 360.6 L801.5 365.0 L733.8 350.0 L733.0 344.0 L674.0 332.5Z" fill="#6c1b01" stroke="#0c0200" stroke-width="1.17" stroke-linejoin="round" />
<path d="M673.0 306.0 L893.0 354.4" fill="none" stroke="#0c0200" stroke-width="1.8" />
<path d="M737.0 325.7 L805.0 340.4 L801.5 352.7 L733.8 338.6Z" fill="#a02a00" stroke="#0c0200" stroke-width="1.04" stroke-linejoin="round" />
<path d="M733.8 338.6 L801.5 352.7 L801.5 365.0 L733.8 350.0Z" fill="#6c1b01" stroke="#0c0200" stroke-width="1.04" stroke-linejoin="round" />
<path d="M874.0 352.0 L897.0 340.0 L915.0 335.0 L935.0 330.0 L940.0 560.0 L918.0 568.0 L903.0 573.0 L895.0 566.0 L871.0 551.0 L874.0 480.0 L876.0 420.0Z" fill="#a02a00" stroke="none" stroke-width="1.17" stroke-linejoin="round" />
<path d="M893.0 400.0 C892.7 408.3 891.8 433.3 891.0 450.0 C890.2 466.7 888.5 484.2 888.0 500.0 C887.5 515.8 888.0 537.5 888.0 545.0" fill="none" stroke="#581500" stroke-width="9" />
<path d="M899.0 402.0 C898.7 410.0 897.7 433.7 897.0 450.0 C896.3 466.3 895.0 484.2 895.0 500.0 C895.0 515.8 895.5 532.7 897.0 545.0 C898.5 557.3 902.8 569.2 904.0 574.0" fill="none" stroke="#0c0200" stroke-width="1.04" />
<path d="M905.0 415.0 C904.7 422.5 903.5 444.2 903.0 460.0 C902.5 475.8 901.7 495.3 902.0 510.0 C902.3 524.7 903.5 537.7 905.0 548.0 C906.5 558.3 910.0 568.0 911.0 572.0" fill="none" stroke="#0c0200" stroke-width="0.91" />
<path d="M884.0 417.0 L906.0 420.0 L906.0 429.0 L884.0 426.0Z" fill="#a02a00" stroke="#0c0200" stroke-width="0.91" stroke-linejoin="round" />
<path d="M654.5 361.5 L877.0 408.8" fill="none" stroke="#0c0200" stroke-width="2.4" />
<path d="M654.5 361.5 L659.5 357.0" fill="none" stroke="#0c0200" stroke-width="0.91" />
<path d="M652.1 379.0 L876.1 426.6" fill="none" stroke="#0c0200" stroke-width="2.4" />
<path d="M652.1 379.0 L657.1 374.5" fill="none" stroke="#0c0200" stroke-width="0.91" />
<path d="M649.7 391.5 L875.5 439.5" fill="none" stroke="#0c0200" stroke-width="2.4" />
<path d="M649.7 391.5 L654.7 387.0" fill="none" stroke="#0c0200" stroke-width="0.91" />
<path d="M649.3 404.0 L874.9 452.0" fill="none" stroke="#0c0200" stroke-width="2.4" />
<path d="M649.3 404.0 L654.3 399.5" fill="none" stroke="#0c0200" stroke-width="0.91" />
<path d="M648.9 416.5 L874.2 464.4" fill="none" stroke="#0c0200" stroke-width="2.4" />
<path d="M648.9 416.5 L653.9 412.0" fill="none" stroke="#0c0200" stroke-width="0.91" />
<path d="M648.5 429.0 L873.6 476.9" fill="none" stroke="#0c0200" stroke-width="2.4" />
<path d="M648.5 429.0 L653.5 424.5" fill="none" stroke="#0c0200" stroke-width="0.91" />
<path d="M650.0 440.0 L873.0 487.4" fill="none" stroke="#0c0200" stroke-width="2.4" />
<path d="M650.0 440.0 L655.0 435.5" fill="none" stroke="#0c0200" stroke-width="0.91" />
<path d="M651.5 451.5 L872.5 498.5" fill="none" stroke="#0c0200" stroke-width="2.4" />
<path d="M651.5 451.5 L656.5 447.0" fill="none" stroke="#0c0200" stroke-width="0.91" />
<path d="M653.0 463.0 L871.9 509.5" fill="none" stroke="#0c0200" stroke-width="2.4" />
<path d="M653.0 463.0 L658.0 458.5" fill="none" stroke="#0c0200" stroke-width="0.91" />
<path d="M656.2 474.0 L871.4 519.7" fill="none" stroke="#0c0200" stroke-width="2.4" />
<path d="M656.2 474.0 L661.2 469.5" fill="none" stroke="#0c0200" stroke-width="0.91" />
<path d="M660.0 484.5 L870.8 529.3" fill="none" stroke="#0c0200" stroke-width="2.4" />
<path d="M660.0 484.5 L665.0 480.0" fill="none" stroke="#0c0200" stroke-width="0.91" />
<path d="M664.0 495.0 L870.3 538.9" fill="none" stroke="#0c0200" stroke-width="2.4" />
<path d="M664.0 495.0 L669.0 490.5" fill="none" stroke="#0c0200" stroke-width="0.91" />
<path d="M669.8 506.0 L869.8 548.5" fill="none" stroke="#0c0200" stroke-width="2.4" />
<path d="M669.8 506.0 L674.8 501.5" fill="none" stroke="#0c0200" stroke-width="0.91" />
<path d="M875.5 439.5 L885.5 449.2 L874.9 452.0Z" fill="#a02a00" stroke="#0c0200" stroke-width="1.04" stroke-linejoin="round" />
<path d="M874.9 452.0 L884.9 461.7 L874.2 464.4Z" fill="#a02a00" stroke="#0c0200" stroke-width="1.04" stroke-linejoin="round" />
<path d="M874.2 464.4 L884.2 474.1 L873.6 476.9Z" fill="#a02a00" stroke="#0c0200" stroke-width="1.04" stroke-linejoin="round" />
<path d="M873.6 476.9 L883.6 485.6 L873.0 487.4Z" fill="#a02a00" stroke="#0c0200" stroke-width="1.04" stroke-linejoin="round" />
<path d="M873.0 487.4 L883.0 496.5 L872.5 498.5Z" fill="#a02a00" stroke="#0c0200" stroke-width="1.04" stroke-linejoin="round" />
<path d="M872.5 498.5 L882.5 507.5 L871.9 509.5Z" fill="#a02a00" stroke="#0c0200" stroke-width="1.04" stroke-linejoin="round" />
<path d="M871.9 509.5 L881.9 518.1 L871.4 519.7Z" fill="#a02a00" stroke="#0c0200" stroke-width="1.04" stroke-linejoin="round" />
<path d="M871.4 519.7 L881.4 528.0 L870.8 529.3Z" fill="#a02a00" stroke="#0c0200" stroke-width="1.04" stroke-linejoin="round" />
<path d="M870.8 529.3 L880.8 537.6 L870.3 538.9Z" fill="#a02a00" stroke="#0c0200" stroke-width="1.04" stroke-linejoin="round" />
<path d="M870.3 538.9 L880.3 547.2 L869.8 548.5Z" fill="#a02a00" stroke="#0c0200" stroke-width="1.04" stroke-linejoin="round" />
<path d="M871.0 379.0 L884.0 371.0 L887.0 405.0 L874.0 398.0Z" fill="#6c1b01" stroke="#0c0200" stroke-width="1.04" stroke-linejoin="round" />
<path d="M884.0 371.0 L911.0 366.0 L925.0 356.0 L914.0 374.0 L913.0 394.0 L906.0 420.0 L893.0 424.0 L887.0 405.0Z" fill="#a02a00" stroke="#0c0200" stroke-width="1.17" stroke-linejoin="round" />
<path d="M897.0 369.0 L911.0 366.0 L925.0 356.0 L925.0 362.0 L911.0 379.0Z" fill="#6c1b01" stroke="#0c0200" stroke-width="0.91" stroke-linejoin="round" />
<path d="M894.500 382l5-3.500l6.500 1.500l2 6l-3 6l-6.500 1l-4.500-4.500z" fill="#a7a3a1" stroke="#333" stroke-width="0.900"/>
<ellipse cx="902.500" cy="386" rx="3.500" ry="4.500" fill="#c4c0be" stroke="#555" stroke-width="0.700"/>
<path d="M884.0 543.0 L897.0 540.0 L899.0 560.0 L908.0 566.0 L905.0 578.0 L890.0 572.0 L884.0 560.0Z" fill="#6c1b01" stroke="#0c0200" stroke-width="0.91" stroke-linejoin="round" />
<ellipse cx="911.500" cy="565" rx="2.500" ry="3.500" fill="#c8c4c2" stroke="#555" stroke-width="0.600"/>
<path d="M668.0 507.0 L675.0 518.0 L700.0 531.0 L706.0 517.5 L690.0 511.0Z" fill="#4a1200" stroke="none" stroke-width="1.17" stroke-linejoin="round" />
<path d="M668.7 544.5 L641.0 566.0 L875.0 615.0 L897.5 597.5 L892.0 580.0 L692.5 547.5Z" fill="#a02a00" stroke="#0c0200" stroke-width="1.17" stroke-linejoin="round" />
<path d="M641.0 566.0 L875.0 615.0 L877.5 630.7 L643.7 581.0Z" fill="#701c01" stroke="#0c0200" stroke-width="1.17" stroke-linejoin="round" />
<path d="M641.0 566.0 L875.0 615.0 L875.5 619.0 L641.6 570.0Z" fill="#9a2800" stroke="#0c0200" stroke-width="0.65" stroke-linejoin="round" />
<path d="M875.0 615.0 L897.5 597.5 L899.0 611.0 L893.0 615.0 L893.0 609.0 L886.0 614.0 L886.0 621.0 L877.5 630.7Z" fill="#8a2300" stroke="#0c0200" stroke-width="1.17" stroke-linejoin="round" />
<path d="M705.0 517.5 L875.0 551.0 L893.0 560.0 L897.0 566.0 L904.0 573.0 L894.0 598.0 L891.0 597.5 L826.0 583.7 L801.0 578.7 L742.5 566.0 L717.5 560.0 L691.0 554.5Z" fill="#a02a00" stroke="#0c0200" stroke-width="1.17" stroke-linejoin="round" />
<path d="M668.7 544.5 L692.5 547.5" fill="none" stroke="#0c0200" stroke-width="1.17" />
<path d="M726.0 521.0 L717.5 575.0 L728.7 577.5 L736.0 523.7Z" fill="#a02a00" stroke="#0c0200" stroke-width="1.04" stroke-linejoin="round" />
<path d="M736.0 523.7 L728.7 577.5 L743.7 565.0 L757.5 528.7Z" fill="#9a2800" stroke="#0c0200" stroke-width="1.04" stroke-linejoin="round" />
<path d="M807.5 540.0 L800.0 591.0 L811.0 593.7 L820.0 542.5Z" fill="#a02a00" stroke="#0c0200" stroke-width="1.04" stroke-linejoin="round" />
<path d="M820.0 542.5 L811.0 593.7 L826.0 583.7 L840.0 546.0Z" fill="#9a2800" stroke="#0c0200" stroke-width="1.04" stroke-linejoin="round" />
<ellipse cx="676" cy="558.700" rx="7.500" ry="4" fill="#a02a00" stroke="#160400" stroke-width="0.900"/>
<ellipse cx="860" cy="597.500" rx="8" ry="4" fill="#a02a00" stroke="#160400" stroke-width="0.900"/>
<path d="M905.5 572.5 L895.0 597.5" fill="none" stroke="#f09a70" stroke-width="1.6" />
<path d="M904.5 572.5 L894.0 597.5" fill="none" stroke="#0c0200" stroke-width="0.78" />
<path d="M898.7 320.0 L913.7 312.5 L972.0 270.0 L985.0 282.0 L965.0 310.0 L940.0 335.0 L915.0 372.0 L905.0 352.5Z" fill="#a02a00" stroke="#0c0200" stroke-width="1.04" stroke-linejoin="round" />
<path d="M905.0 352.5 L961.0 301.0 L975.0 295.0 L950.0 325.0 L925.0 362.0 L914.0 380.0Z" fill="#982700" stroke="#0c0200" stroke-width="0.91" stroke-linejoin="round" />
<path d="M907.0 360.0 L925.0 335.0 L945.0 315.0 L962.0 302.0" fill="none" stroke="#e8733c" stroke-width="2.2" stroke-linecap="round"/>
<path d="M905.0 352.5 L961.0 301.0" fill="none" stroke="#0c0200" stroke-width="1.04" />
<path d="M795.0 252.0 L800.0 255.0 L805.0 304.0 L806.0 336.0 L797.0 333.0Z" fill="#7a1f00" stroke="#0c0200" stroke-width="0.91" stroke-linejoin="round" />
<path d="M798.0 250.0 L881.0 270.0 L887.5 319.0 L893.0 354.0 L805.0 335.0 L805.0 302.5Z" fill="#6c1b01" stroke="#0c0200" stroke-width="1.04" stroke-linejoin="round" />
<path d="M805.0 302.5 L887.5 319.0" fill="none" stroke="#0c0200" stroke-width="1.17" />
<path d="M881.0 272.0 L897.5 274.0 L911.0 266.0 L913.7 312.5 L886.0 319.0Z" fill="#a02a00" stroke="#0c0200" stroke-width="1.04" stroke-linejoin="round" />
<path d="M911.0 266.0 L905.0 270.0 L996.0 199.0 L989.0 208.0 L992.5 253.0 L913.7 312.5Z" fill="#992800" stroke="#0c0200" stroke-width="1.04" stroke-linejoin="round" />
<path d="M911.0 268.0 L913.7 312.5" fill="none" stroke="#0c0200" stroke-width="1.04" />
<path d="M886.0 319.0 L913.7 312.5 L898.7 320.0 L905.0 352.5 L893.0 354.0Z" fill="#6c1b01" stroke="#0c0200" stroke-width="0.91" stroke-linejoin="round" />
<path d="M781.0 240.5 L896.0 265.5 L897.5 275.5 L782.5 252.0Z" fill="#a02a00" stroke="#0c0200" stroke-width="1.04" stroke-linejoin="round" />
<path d="M896.0 265.5 L997.5 185.5 L999.0 197.0 L897.5 275.5Z" fill="#8a2300" stroke="#0c0200" stroke-width="1.04" stroke-linejoin="round" />
<path d="M877.5 159.0 L997.5 185.5 L896.0 265.5 L781.0 240.5Z" fill="#962700" stroke="#0c0200" stroke-width="1.17" stroke-linejoin="round" />
<path d="M782.0 245.0 L896.5 270.0 L998.0 190.0" fill="none" stroke="#b9b0aa" stroke-width="1.04" stroke-dasharray="2.5 1.2"/>
<path d="M893.7 168.0 L966.0 180.5 L955.0 199.0 L854.0 180.5 L860.0 176.7Z" fill="#8f2500" stroke="#0c0200" stroke-width="1.04" stroke-linejoin="round" />
<path d="M955.0 199.0 L966.0 180.5 L961.0 203.5Z" fill="#9a2800" stroke="#0c0200" stroke-width="1.04" stroke-linejoin="round" />
<path d="M917.0 231.7 L955.0 199.0 L961.0 203.5 L920.0 237.7Z" fill="#b03205" stroke="#0c0200" stroke-width="1.04" stroke-linejoin="round" />
<path d="M875.0 253.0 L917.0 231.7 L920.0 237.7Z" fill="#c8420f" stroke="#0c0200" stroke-width="1.04" stroke-linejoin="round" />
<path d="M854.0 180.5 L955.0 199.0 L917.0 231.7 L816.0 209.0Z" fill="#9c2900" stroke="#0c0200" stroke-width="1.04" stroke-linejoin="round" />
<path d="M816.0 209.0 L917.0 231.7 L875.0 253.0 L811.0 240.5Z" fill="#a42c00" stroke="#0c0200" stroke-width="1.04" stroke-linejoin="round" />
<path d="M854.0 180.5 L860.0 176.7" fill="none" stroke="#0c0200" stroke-width="1.04" />
<text transform="translate(886.500 203.500) rotate(191.500) skewX(-28)" font-family="Liberation Sans, sans-serif" font-weight="bold" font-size="12.500" text-anchor="middle" fill="#8a2300" stroke="#2e0900" stroke-width="0.800" textLength="72" lengthAdjust="spacingAndGlyphs">HOYER</text>
<ellipse cx="883" cy="163.5" rx="5" ry="3.400" fill="#8e8a88"/>
<ellipse cx="883" cy="162.0" rx="5" ry="3" fill="#b4b0ae"/>
<ellipse cx="985.5" cy="185.5" rx="5" ry="3.400" fill="#8e8a88"/>
<ellipse cx="985.5" cy="184.0" rx="5" ry="3" fill="#b4b0ae"/>
<ellipse cx="791" cy="236.5" rx="5" ry="3.400" fill="#8e8a88"/>
<ellipse cx="791" cy="235.0" rx="5" ry="3" fill="#b4b0ae"/>
<ellipse cx="893.5" cy="258" rx="5" ry="3.400" fill="#8e8a88"/>
<ellipse cx="893.5" cy="256.5" rx="5" ry="3" fill="#b4b0ae"/>
<path d="M786.0 253.0 L793.0 254.5 L794.0 270.0 L789.0 272.0Z" fill="#b8b4b2" stroke="#444" stroke-width="0.78" stroke-linejoin="round" />
<ellipse cx="998.1" cy="437.1" rx="89.6" ry="173.0" transform="rotate(9.9 998.1 437.1)" fill="#8a2300" stroke="#0c0200" stroke-width="1.3" />
<ellipse cx="1000.0" cy="437.5" rx="88.3" ry="170.5" transform="rotate(9.9 1000.0 437.5)" fill="#952600" stroke="#0c0200" stroke-width="0.78" />
<ellipse cx="1003.0" cy="438.0" rx="87.0" ry="168.0" transform="rotate(9.9 1003.0 438.0)" fill="#9e2900" stroke="#0c0200" stroke-width="1.3" />
<ellipse cx="1003.5" cy="438.1" rx="84.0" ry="162.1" transform="rotate(9.9 1003.5 438.1)" fill="none" stroke="#0c0200" stroke-width="0.78" />
<ellipse cx="1023.7" cy="289.5" rx="3.2" ry="5.4" transform="rotate(9.9 1023.7 289.5)" fill="#a42c00" stroke="#160400" stroke-width="0.900"/>
<ellipse cx="1075.0" cy="328.7" rx="3.2" ry="5.4" transform="rotate(9.9 1075.0 328.7)" fill="#a42c00" stroke="#160400" stroke-width="0.900"/>
<ellipse cx="1084.5" cy="432.5" rx="3.2" ry="5.4" transform="rotate(9.9 1084.5 432.5)" fill="#a42c00" stroke="#160400" stroke-width="0.900"/>
<ellipse cx="1046.0" cy="544.0" rx="3.2" ry="5.4" transform="rotate(9.9 1046.0 544.0)" fill="#a42c00" stroke="#160400" stroke-width="0.900"/>
<ellipse cx="982.5" cy="594.0" rx="3.2" ry="5.4" transform="rotate(9.9 982.5 594.0)" fill="#a42c00" stroke="#160400" stroke-width="0.900"/>
<ellipse cx="931.0" cy="555.0" rx="3.2" ry="5.4" transform="rotate(9.9 931.0 555.0)" fill="#a42c00" stroke="#160400" stroke-width="0.900"/>
<ellipse cx="922.5" cy="449.5" rx="3.2" ry="5.4" transform="rotate(9.9 922.5 449.5)" fill="#a42c00" stroke="#160400" stroke-width="0.900"/>
<ellipse cx="960.0" cy="339.5" rx="3.2" ry="5.4" transform="rotate(9.9 960.0 339.5)" fill="#a42c00" stroke="#160400" stroke-width="0.900"/>
<ellipse cx="1055.0" cy="528.7" rx="1.9" ry="3.2" transform="rotate(9.9 1055.0 528.7)" fill="#a42c00" stroke="#160400" stroke-width="0.900"/>
<ellipse cx="1091.0" cy="420.0" rx="1.6" ry="2.7" transform="rotate(9.9 1091.0 420.0)" fill="#a42c00" stroke="#160400" stroke-width="0.900"/>
<ellipse cx="1006.0" cy="438.5" rx="72.6" ry="140.3" transform="rotate(9.9 1006.0 438.5)" fill="#a22b00" stroke="#0c0200" stroke-width="1.04" />
<ellipse cx="1009.5" cy="439.1" rx="70.5" ry="136.1" transform="rotate(9.9 1009.5 439.1)" fill="#9a2800" stroke="#0c0200" stroke-width="1.04" />
<clipPath id="cpBowl"><ellipse cx="1009.5" cy="439.1" rx="68.3" ry="131.9" transform="rotate(9.9 1009.5 439.1)"/></clipPath>
<ellipse cx="1009.5" cy="439.1" rx="68.3" ry="131.9" transform="rotate(9.9 1009.5 439.1)" fill="url(#gBowl)" stroke="#0c0200" stroke-width="1.04" />
<g clip-path="url(#cpBowl)">
<ellipse cx="974.4" cy="433.0" rx="65.2" ry="126.0" transform="rotate(9.9 974.4 433.0)" fill="#a02a00" stroke="#0c0200" stroke-width="1.17" />
<ellipse cx="974.4" cy="433.0" rx="62.6" ry="121.0" transform="rotate(9.9 974.4 433.0)" fill="none" stroke="#0c0200" stroke-width="0.78" />
<ellipse cx="979.4" cy="433.9" rx="47.9" ry="92.4" transform="rotate(9.9 979.4 433.9)" fill="none" stroke="#0c0200" stroke-width="0.78" />
</g>
<path d="M1002.5 402.0 L1024.4 339.3 L1030.0 335.8 L1037.0 341.0 L1017.6 406.0Z" fill="#a62d00" stroke="#0c0200" stroke-width="1.04" stroke-linejoin="round" />
<path d="M1002.5 402.0 L1024.4 339.3 L1030.0 335.8 L1008.0 403.5Z" fill="#c9440f" stroke="#0c0200" stroke-width="0.78" stroke-linejoin="round" />
<path d="M1004.0 400.0 L1025.5 340.0" fill="none" stroke="#e0602c" stroke-width="1.69" />
<path d="M978.7 497.0 L991.0 500.0 L997.5 547.5 L992.5 551.0 L985.0 545.4Z" fill="#a62d00" stroke="#0c0200" stroke-width="1.04" stroke-linejoin="round" />
<path d="M985.5 499.0 L992.0 548.0" fill="none" stroke="#0c0200" stroke-width="0.78" />
<path d="M981.0 499.0 L987.0 545.0" fill="none" stroke="#e0602c" stroke-width="1.56" />
<ellipse cx="993" cy="548" rx="3.500" ry="2.200" fill="#e0602c" stroke="#160400" stroke-width="0.500"/>
<path d="M940.0 424.0 L968.0 428.0 L968.0 441.0 L940.0 437.0Z" fill="#a62d00" stroke="#0c0200" stroke-width="1.04" stroke-linejoin="round" />
<path d="M941.0 426.0 L967.0 430.0" fill="none" stroke="#e0602c" stroke-width="1.43" />
<ellipse cx="979.4" cy="433.9" rx="37.4" ry="64.7" transform="rotate(9.9 979.4 433.9)" fill="#a42c00" stroke="#0c0200" stroke-width="1.17" />
<path d="M984.8 374.9 L982.8 375.1 L980.9 375.5 L978.9 376.1 L976.9 376.9 L974.9 377.8 L973.0 378.9 L971.0 380.2 L969.1 381.7 L967.2 383.3 L965.4 385.1 L963.6 387.1 L961.9 389.1 L960.2 391.4 L958.5 393.7 L957.0 396.2 L955.5 398.8 L954.0 401.5 L952.7 404.4 L951.4 407.3 L950.3 410.3 L949.2 413.3 L948.2 416.5 L947.3 419.6 L946.5 422.9" fill="none" stroke="#c84814" stroke-width="4.2" stroke-linecap="round"/>
<path d="M983.6 374.2 L981.8 374.5 L979.9 375.0 L978.0 375.6 L976.2 376.4 L974.3 377.3 L972.4 378.5 L970.6 379.7 L968.8 381.1 L967.0 382.7 L965.3 384.4 L963.6 386.2 L961.9 388.2 L960.3 390.3 L958.7 392.5 L957.2 394.8 L955.8 397.2 L954.4 399.8 L953.1 402.4 L951.9 405.1 L950.7 407.9 L949.6 410.7 L948.6 413.7 L947.7 416.6 L946.9 419.7" fill="none" stroke="#f08a58" stroke-width="1.6" stroke-linecap="round"/>
<path d="M1014.7 419.3 L1014.6 416.9 L1014.4 414.6 L1014.1 412.2 L1013.8 409.9 L1013.5 407.7 L1013.1 405.5 L1012.6 403.3 L1012.0 401.2 L1011.4 399.2 L1010.8 397.2 L1010.1 395.3 L1009.3 393.4 L1008.5 391.6 L1007.6 389.9 L1006.7 388.3 L1005.7 386.8 L1004.7 385.3 L1003.6 383.9 L1002.5 382.6 L1001.4 381.5 L1000.2 380.4 L999.0 379.4 L997.7 378.4 L996.4 377.6" fill="none" stroke="#8a2300" stroke-width="4.0" stroke-linecap="round"/>
<ellipse cx="981.3" cy="434.2" rx="31.3" ry="55.4" transform="rotate(9.9 981.3 434.2)" fill="#982700" stroke="#0c0200" stroke-width="1.04" />
<path d="M989.9 389.8 L988.5 389.9 L987.1 390.1 L985.7 390.4 L984.2 390.8 L982.8 391.4 L981.4 392.1 L980.0 392.9 L978.6 393.9 L977.2 394.9 L975.9 396.1 L974.5 397.4 L973.2 398.9 L972.0 400.4 L970.7 402.0 L969.5 403.7 L968.4 405.6 L967.3 407.5 L966.2 409.4 L965.2 411.5 L964.3 413.6 L963.4 415.8 L962.6 418.1 L961.8 420.4 L961.2 422.7" fill="none" stroke="#c84814" stroke-width="3.2" stroke-linecap="round"/>
<path d="M988.6 389.5 L987.3 389.7 L986.0 390.0 L984.7 390.3 L983.4 390.8 L982.1 391.4 L980.8 392.1 L979.5 392.9 L978.3 393.8 L977.0 394.8 L975.8 395.9 L974.6 397.1 L973.4 398.4 L972.2 399.7 L971.1 401.2 L970.0 402.7 L968.9 404.3 L967.9 406.0 L966.9 407.8 L965.9 409.6 L965.0 411.5 L964.2 413.5 L963.4 415.5 L962.6 417.5 L961.9 419.6" fill="none" stroke="#f08a58" stroke-width="1.56" stroke-linecap="round"/>
<ellipse cx="983.3" cy="434.6" rx="27.0" ry="48.7" transform="rotate(9.9 983.3 434.6)" fill="none" stroke="#0c0200" stroke-width="0.91" />
<ellipse cx="987.2" cy="435.2" rx="21.8" ry="40.3" transform="rotate(9.9 987.2 435.2)" fill="#8e2400" stroke="#0c0200" stroke-width="1.04" />
<ellipse cx="991.2" cy="435.9" rx="17.4" ry="33.6" transform="rotate(9.9 991.2 435.9)" fill="#a22b00" stroke="#0c0200" stroke-width="1.04" />
<ellipse cx="994.1" cy="436.5" rx="15.2" ry="29.4" transform="rotate(9.9 994.1 436.5)" fill="#7e2000" stroke="#0c0200" stroke-width="1.04" />
<path d="M966.0 380.0 L975.0 372.0 L990.0 373.0 L1006.0 380.0 L1019.0 391.0 L1016.0 402.0 L1003.0 396.0 L990.0 392.0 L972.0 392.0Z" fill="#a62d00" stroke="#0c0200" stroke-width="1.04" stroke-linejoin="round" />
<path d="M968.0 380.5 L976.0 374.0 L988.0 374.5" fill="none" stroke="#e0602c" stroke-width="1.5" />
<ellipse cx="985" cy="390.800" rx="4.600" ry="5" fill="#aaa6a4" stroke="#555" stroke-width="0.700"/>
<path d="M947.0 478.0 L958.0 474.0 L972.0 478.0 L990.0 488.0 L989.0 497.0 L972.0 493.0 L954.0 491.0Z" fill="#a62d00" stroke="#0c0200" stroke-width="1.04" stroke-linejoin="round" />
<ellipse cx="967.500" cy="483.800" rx="3.600" ry="4" fill="#b4b0ae" stroke="#444" stroke-width="0.700"/>
<path d="M997.0 424.0 L1075.0 437.5 L1082.0 450.0 L1080.0 470.0 L1071.0 477.5 L997.0 462.5Z" fill="url(#gShaft)" stroke="#0c0200" stroke-width="1.17" stroke-linejoin="round" />
<ellipse cx="997" cy="443" rx="8" ry="19.500" transform="rotate(9.900 997 443)" fill="none" stroke="#160400" stroke-width="0.800"/>
<ellipse cx="1077" cy="457" rx="9.300" ry="20.300" transform="rotate(9.900 1077 457)" fill="#a62d00" stroke="#160400" stroke-width="0.900"/>
<ellipse cx="1077" cy="457" rx="7.500" ry="17" transform="rotate(9.900 1077 457)" fill="none" stroke="#160400" stroke-width="0.600"/>
<ellipse cx="1077.500" cy="457" rx="4" ry="7.500" transform="rotate(9.900 1077.500 457)" fill="#c9440f" stroke="#160400" stroke-width="0.800"/>
<ellipse cx="1078" cy="457.500" rx="2.200" ry="4.500" transform="rotate(9.900 1078 457.500)" fill="#8a2300" stroke="#160400" stroke-width="0.500"/>
<path d="M1010.0 422.5 L1068.7 433.5 L1066.5 441.0 L1012.5 431.5Z" fill="#b8b4b2" stroke="#2a2a2a" stroke-width="1.04" stroke-linejoin="round" />
<path d="M1012.0 427.5 L1067.5 438.0" fill="none" stroke="#6a6a6a" stroke-width="0.91" />
<path d="M824.0 399.3 L843.3 402.5" fill="none" stroke="#2030e0" stroke-width="1.04" />
<path d="M843.3 402.5 L830.0 418.0" fill="none" stroke="#60b020" stroke-width="0.91" />
<path d="M845.0 404.0 L850.0 432.0" fill="none" stroke="#e02020" stroke-width="0.78" />
<circle cx="843.300" cy="402.500" r="3" fill="#9a9090"/>
</svg>
</body>
</html>
